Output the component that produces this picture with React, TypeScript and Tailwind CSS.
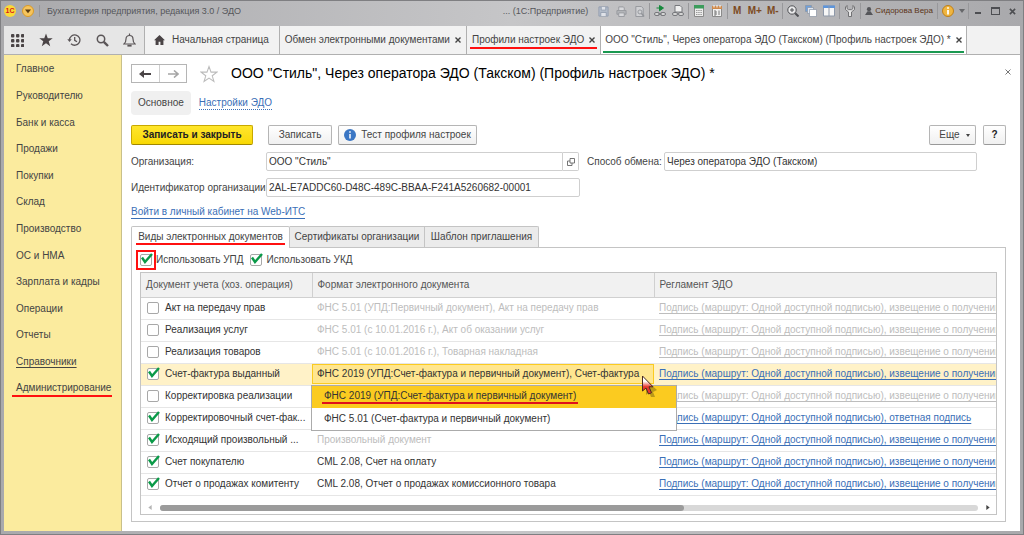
import type { ReactNode } from 'react';

const sections = [
  'Главное',
  'Руководителю',
  'Банк и касса',
  'Продажи',
  'Покупки',
  'Склад',
  'Производство',
  'ОС и НМА',
  'Зарплата и кадры',
  'Операции',
  'Отчеты',
  'Справочники',
  'Администрирование',
];

const receipt =
  'Подпись (маршрут: Одной доступной подписью), извещение о получении';
const reply =
  'Подпись (маршрут: Одной доступной подписью), ответная подпись';

interface IDocumentRow {
  name: string;
  format: string;
  rule: string;
  checked: boolean;
  muted?: boolean;
  selected?: boolean;
}

const rows: IDocumentRow[] = [
  { name: 'Акт на передачу прав', format: 'ФНС 5.01 (УПД:Первичный документ), Акт на передачу прав', rule: receipt, checked: false, muted: true },
  { name: 'Реализация услуг', format: 'ФНС 5.01 (с 10.01.2016 г.), Акт об оказании услуг', rule: receipt, checked: false, muted: true },
  { name: 'Реализация товаров', format: 'ФНС 5.01 (с 10.01.2016 г.), Товарная накладная', rule: receipt, checked: false, muted: true },
  { name: 'Счет-фактура выданный', format: 'ФНС 2019 (УПД:Счет-фактура и первичный документ), Счет-фактура', rule: receipt, checked: true, selected: true },
  { name: 'Корректировка реализации', format: '', rule: receipt, checked: false, muted: true },
  { name: 'Корректировочный счет-фак...', format: '', rule: reply, checked: true },
  { name: 'Исходящий произвольный ...', format: 'Произвольный документ', rule: receipt, checked: true },
  { name: 'Счет покупателю', format: 'CML 2.08, Счет на оплату', rule: receipt, checked: true },
  { name: 'Отчет о продажах комитенту', format: 'CML 2.08, Отчет о продажах комиссионного товара', rule: receipt, checked: true },
];

function Check({ checked, id }: { checked: boolean; id: string }) {
  return (
    <span className="relative block h-3 w-3 shrink-0">
      <input
        id={id}
        type="checkbox"
        defaultChecked={checked}
        className="peer block h-3 w-3 appearance-none rounded-xs border border-[#a8a8a8] bg-white"
      />
      <svg
        viewBox="0 0 14 14"
        className="pointer-events-none absolute -top-[3px] left-0 hidden h-[14px] w-[14px] peer-checked:block"
      >
        <path d="M2 6.500 5 11 12 3" fill="none" stroke="#0a9a48" strokeWidth="2.400" />
      </svg>
    </span>
  );
}

function Separator() {
  return <span className="mx-px block h-4 w-px shrink-0 bg-[#98989b]" />;
}

function ToolButton({ label, children }: { label: string; children: ReactNode }) {
  return (
    <button aria-label={label} className="flex h-4 w-[18px] shrink-0 items-center justify-center">
      {children}
    </button>
  );
}

function TitleBar() {
  return (
    <header className="flex h-5 items-center pr-1 text-[9px] text-[#55565a]">
      <span className="flex h-3 w-3 shrink-0 items-center justify-center rounded-full bg-[#fbd937] text-[7px] font-bold text-[#d8211c]">
        1С
      </span>
      <button
        aria-label="Главное меню"
        className="ml-[6px] flex h-3 w-3 shrink-0 items-center justify-center rounded-full border border-[#d99a28] bg-[#f6c45c]"
      >
        <svg viewBox="0 0 8 8" className="h-[6px] w-[6px]">
          <path d="M0 2h8L4 7z" fill="#5a3b10" />
        </svg>
      </button>
      <span className="ml-[5px] h-3 w-px bg-[#96969a]" />
      <h1 className="ml-[7px] truncate">Бухгалтерия предприятия, редакция 3.0 / ЭДО</h1>

      <div className="ml-auto flex items-center">
        <span className="mr-[6px] whitespace-nowrap">... (1С:Предприятие)</span>
        <ToolButton label="Сохранить">
          <svg viewBox="0 0 12 12" className="h-[11px] w-[11px]" fill="none" stroke="#929cae">
            <path d="M1 1h10v10H1z" fill="#b4bdca" />
            <path d="M3.500 1v3.500h5V1M3 11V7h6v4" fill="#dfe2e8" />
          </svg>
        </ToolButton>
        <ToolButton label="Печать">
          <svg viewBox="0 0 12 12" className="h-[11px] w-[11px]" fill="#b5b7bb" stroke="#95979c">
            <path d="M3 5V1h5l1 1v3" fill="#d8d9dc" />
            <path d="M1 5h10v4H1z" />
            <path d="M3 7.500h6v4H3z" fill="#d8d9dc" />
          </svg>
        </ToolButton>
        <ToolButton label="Предварительный просмотр">
          <svg viewBox="0 0 12 12" className="h-[11px] w-[11px]" fill="none" stroke="#929499">
            <path d="M2 .5h6l2 2v9H2z" fill="#cfd0d3" />
            <circle cx="6.500" cy="6.500" r="2.200" />
            <path d="m8 8 3 3.500" strokeWidth="1.600" />
          </svg>
        </ToolButton>
        <Separator />
        <ToolButton label="Добавить ссылку">
          <svg viewBox="0 0 12 12" className="h-3 w-3" fill="none" stroke="#77787c">
            <path d="M2.500 3h3V.5L9.500 3l-4 2.800V3" fill="#16883c" stroke="#16883c" />
            <rect x=".5" y="7.500" width="5" height="3" rx="1.500" fill="#d4d4d4" />
            <rect x="6.500" y="7.500" width="5" height="3" rx="1.500" fill="#d4d4d4" />
            <path d="M4 9h4" />
          </svg>
        </ToolButton>
        <ToolButton label="Перейти по ссылке">
          <svg viewBox="0 0 12 12" className="h-3 w-3" fill="none" stroke="#77787c">
            <path d="M3 .5h5l2 2V7H3z" fill="#f0f0f0" />
            <rect x=".5" y="7.500" width="5" height="3" rx="1.500" fill="#d4d4d4" />
            <rect x="6.500" y="7.500" width="5" height="3" rx="1.500" fill="#d4d4d4" />
          </svg>
        </ToolButton>
        <Separator />
        <ToolButton label="Калькулятор">
          <svg viewBox="0 0 12 12" className="h-3 w-3">
            <path d="M1.500.5h9v11h-9z" fill="#ececec" stroke="#8a8a8a" />
            <path d="M1 0h10v3.500H1z" fill="#3c9c5c" />
            <path d="M3 5.500h6M3 7.500h6M3 9.500h6" stroke="#9a9a9a" strokeDasharray="1.500 .7" />
          </svg>
        </ToolButton>
        <ToolButton label="Календарь">
          <svg viewBox="0 0 12 12" className="h-3 w-3">
            <path d="M1.500 1.500h9v10h-9z" fill="#f1f1f1" stroke="#8a8a8a" />
            <path d="M1 1h10v3H1z" fill="#cf8a4c" />
            <path d="M3 0v2.500M6 0v2.500M9 0v2.500" stroke="#fff" />
            <path d="M3 6h2v4M3 8h2M3 10h2M8 5.500V10" fill="none" stroke="#777" />
          </svg>
        </ToolButton>
        <Separator />
        <button className="w-4 text-[10px] font-bold text-[#7c4a22]">M</button>
        <button className="w-[19px] text-[10px] font-bold text-[#7c4a22]">M+</button>
        <button className="w-[17px] text-[10px] font-bold text-[#7c4a22]">M-</button>
        <Separator />
        <ToolButton label="Масштаб">
          <svg viewBox="0 0 12 12" className="h-3 w-3" fill="none" stroke="#4f5054">
            <circle cx="5" cy="5" r="4.200" fill="#e9e9ea" />
            <path d="M5 3v4M3 5h4" />
            <path d="m8.200 8.200 3.300 3.300" strokeWidth="2" />
          </svg>
        </ToolButton>
        <ToolButton label="Окна">
          <svg viewBox="0 0 12 12" className="h-3 w-3" stroke="#8a93a3" strokeWidth=".7">
            <path d="M.5.5h6v6h-6z" fill="#6ea0dc" />
            <path d="M2.500 2.500h6v6h-6z" fill="#dfe8f4" />
            <path d="M4.500 4.500h7v7h-7z" fill="#fff" />
          </svg>
        </ToolButton>
        <ToolButton label="Разделить окно">
          <svg viewBox="0 0 12 12" className="h-3 w-3">
            <path d="M.5 1h11v10H.5z" fill="#f6f6f6" stroke="#8e98a8" />
            <path d="M0 .5h12V3H0z" fill="#5e95da" />
            <path d="M6 1v10" stroke="#8e98a8" />
          </svg>
        </ToolButton>
        <Separator />
        <ToolButton label="Сервис">
          <svg viewBox="0 0 12 12" className="h-3 w-3" fill="#e6e6e6" stroke="#66676a" strokeWidth=".9">
            <path d="M3 .5v3l1.500 1.200h3L9 3.500v-3l1.500 1.500v2.500L7.500 7v4.500h-3V7l-3-2.500V2z" />
          </svg>
        </ToolButton>
        <Separator />
        <button className="mx-[3px] flex items-center gap-[2px] whitespace-nowrap text-[8px] text-[#5b3418]">
          <svg viewBox="0 0 8 8" className="h-2 w-2" fill="#55565a">
            <circle cx="4" cy="2.200" r="2.100" />
            <path d="M2.500 4.200h3L8 8H0z" />
          </svg>
          Сидорова Вера
        </button>
        <Separator />
        <button aria-label="О программе" className="ml-[3px] flex items-center gap-[5px]">
          <svg viewBox="0 0 12 12" className="h-3 w-3">
            <circle cx="6" cy="6" r="5.500" fill="#efb53f" stroke="#bd7f1b" />
            <path d="M6 2.200v1.600M6 5v4.500" stroke="#fff" strokeWidth="1.800" />
          </svg>
          <svg viewBox="0 0 6 4" className="h-1 w-[6px]">
            <path d="M0 0h6L3 4z" fill="#66676a" />
          </svg>
        </button>
        <span className="ml-[2px]">
          <Separator />
        </span>
        <button aria-label="Свернуть" className="ml-[5px] flex h-3 w-4 items-center">
          <span className="mt-1 block h-[2px] w-[6px] bg-[#4d4e52]" />
        </button>
        <button aria-label="Развернуть" className="h-2 w-[9px] border border-t-2 border-[#4d4e52]" />
        <button aria-label="Закрыть" className="ml-[9px]">
          <svg viewBox="0 0 8 8" className="h-[7px] w-[7px]">
            <path d="m1 1 6 6M7 1 1 7" stroke="#4d4e52" strokeWidth="1.800" />
          </svg>
        </button>
      </div>
    </header>
  );
}

function CloseIcon() {
  return (
    <svg viewBox="0 0 6 6" className="h-[6px] w-[6px]">
      <path d="m.5.5 5 5M5.500.5l-5 5" stroke="#444" strokeWidth="1.400" />
    </svg>
  );
}

function NavTab({ title, mark, active }: { title: string; mark?: string; active?: boolean }) {
  return (
    <div
      className={
        'flex shrink-0 items-center border-l border-[#b0b0b0] ' +
        (active ? 'border-r bg-white px-[2px]' : 'bg-[#f2f2f2] px-[3px]')
      }
    >
      <div
        className={
          'flex h-full items-center gap-[5px] whitespace-nowrap px-[2px] ' +
          (mark ?? '')
        }
      >
        <button>{title}</button>
        <button aria-label={'Закрыть: ' + title}>
          <CloseIcon />
        </button>
      </div>
    </div>
  );
}

function TabBar() {
  return (
    <div className="flex h-[29px] border-b border-[#b0b0b0] bg-[#f2f2f2]">
      <div className="flex w-[140px] shrink-0 items-center justify-between bg-[#e6e6e6] pl-[7px] pr-2">
        <button aria-label="Меню функций">
          <svg viewBox="0 0 13 13" className="h-[13px] w-[13px]" fill="#4a4446">
            {[0, 5, 10].map((y) =>
              [0, 5, 10].map((x) => <rect key={x + '-' + y} x={x} y={y} width="3.400" height="3.400" rx="1" />),
            )}
          </svg>
        </button>
        <button aria-label="Избранное">
          <svg viewBox="0 0 24 24" className="h-[14px] w-[14px]" fill="#4a4446">
            <path d="m12 1 3 8h8.500l-6.800 5.200 2.500 8.300L12 17.600l-7.200 4.900 2.500-8.300L.5 9H9z" />
          </svg>
        </button>
        <button aria-label="История">
          <svg viewBox="0 0 14 14" className="h-[14px] w-[14px]" fill="none" stroke="#5a5557" strokeWidth="1.300">
            <path d="M2.500 7a5.200 5.200 0 1 1 1.500 3.700" />
            <path d="M.3 6.300h4.400L2.500 9z" fill="#5a5557" stroke="none" />
            <path d="M7.700 4v3.300l2.300 1.500" />
          </svg>
        </button>
        <button aria-label="Поиск">
          <svg viewBox="0 0 13 13" className="h-[13px] w-[13px]" fill="none" stroke="#5a5557">
            <circle cx="5" cy="5" r="3.700" strokeWidth="1.500" />
            <path d="m7.800 7.800 4.200 4.200" strokeWidth="2.400" />
          </svg>
        </button>
        <button aria-label="Уведомления">
          <svg viewBox="0 0 13 14" className="h-[14px] w-[13px]" fill="none" stroke="#5a5557" strokeWidth="1.200">
            <path d="M1 11c1.600-1.300 2-2.500 2-5a3.500 3.500 0 0 1 7 0c0 2.500.4 3.700 2 5z" />
            <path d="M6.500 2.500V.5" />
            <path d="M5 12.300h3v.7H5z" fill="#5a5557" />
          </svg>
        </button>
      </div>
      <button className="flex shrink-0 items-center gap-[7px] whitespace-nowrap border-l border-[#b0b0b0] pl-[9px] pr-[10px]">
        <svg viewBox="0 0 12 11" className="h-[10px] w-[11px]" fill="#4a4446">
          <path d="M6 0 0 5.700h1.700V11H5V7.500h2V11h3.300V5.700H12z" />
        </svg>
        Начальная страница
      </button>
      <NavTab title="Обмен электронными документами" />
      <NavTab
        title="Профили настроек ЭДО"
        mark="bg-[linear-gradient(#ff1010,#ff1010)] bg-[length:100%_2px] bg-[position:0_21px] bg-no-repeat"
      />
      <NavTab
        active
        title={'ООО "Стиль", Через оператора ЭДО (Такском) (Профиль настроек ЭДО) *'}
        mark="bg-[linear-gradient(#1a9850,#1a9850)] bg-[length:100%_2px] bg-[position:0_25px] bg-no-repeat"
      />
    </div>
  );
}

function Sidebar() {
  return (
    <nav className="w-[118px] shrink-0 border-r border-[#c9c08a] bg-[#fbeb9e] pl-3 pt-px">
      <ul className="grid h-[346px] auto-rows-fr">
        {sections.map((name, index) => (
          <li key={name} className="flex items-center">
            <a
              href="#"
              className={
                index === 12
                  ? '-ml-1 border-b-2 border-[#ff1010] pl-1 pr-px'
                  : index === 11
                    ? 'underline underline-offset-2'
                    : ''
              }
            >
              {name}
            </a>
          </li>
        ))}
      </ul>
    </nav>
  );
}

const buttonStyle =
  'flex h-5 items-center justify-center rounded-xs border border-[#b5b5b5] border-b-[#999] bg-linear-to-b from-white to-[#f0f0f0] whitespace-nowrap';
const inputStyle =
  'h-[19px] min-w-0 rounded-xs border border-[#cfcfcf] bg-white px-[2px] text-[10px] text-[#333]';

function FormHead() {
  return (
    <>
      <div className="flex items-center pt-[9px]">
        <div className="flex h-[19px] w-14 border border-[#b5b5b5]">
          <button aria-label="Назад" className="flex flex-1 items-center justify-center border-r border-[#cfcfcf]">
            <svg viewBox="0 0 12 8" className="h-2 w-3">
              <path d="M5 0v8L0 4zM4 3h8v2H4z" fill="#4a4446" />
            </svg>
          </button>
          <button aria-label="Вперед" className="flex flex-1 items-center justify-center">
            <svg viewBox="0 0 12 8" className="h-2 w-3">
              <path d="M7 .5 11 4 7 7.500M11 4H1" fill="none" stroke="#a5a5a5" strokeWidth="1.600" />
            </svg>
          </button>
        </div>
        <button aria-label="Добавить в избранное" className="ml-[13px]">
          <svg viewBox="0 0 24 24" className="h-[18px] w-[18px]" fill="#fff" stroke="#bcbcbc" strokeWidth="1.400">
            <path d="m12 2 2.700 7.500h7.800l-6.200 4.900 2.300 7.600-6.600-4.600L5.400 22l2.300-7.600-6.200-4.900h7.800z" />
          </svg>
        </button>
        <h2 className="ml-[13px] whitespace-nowrap text-[14px] leading-[19px] text-black">
          ООО "Стиль", Через оператора ЭДО (Такском) (Профиль настроек ЭДО) *
        </h2>
        <button aria-label="Закрыть форму" className="-mt-1 ml-auto mr-[9px]">
          <svg viewBox="0 0 6 6" className="h-[6px] w-[6px]">
            <path d="m.5.5 5 5M5.500.5l-5 5" stroke="#777" />
          </svg>
        </button>
      </div>
      <div className="mt-2 flex h-6 items-center gap-2">
        <button className="h-6 rounded-sm bg-[#f0f0f0] px-[7px]">Основное</button>
        <a href="#" className="border-b border-dotted border-[#3a6fb7] leading-[12px] text-[#3a6fb7]">
          Настройки ЭДО
        </a>
      </div>
      <div className="mr-[14px] mt-[10px] flex">
        <button className="h-5 w-[122px] rounded-xs border border-[#c8a800] border-b-[#a08700] bg-linear-to-b from-[#ffe62a] to-[#f8d800] font-bold text-[#222]">
          Записать и закрыть
        </button>
        <button className={buttonStyle + ' ml-[15px] w-16'}>Записать</button>
        <button className={buttonStyle + ' ml-[6px] w-[139px] gap-[5px]'}>
          <svg viewBox="0 0 12 12" className="h-3 w-3">
            <circle cx="6" cy="6" r="6" fill="#3a76c4" />
            <path d="M6 2.300v1.500M6 5v4.500" stroke="#fff" strokeWidth="1.500" />
          </svg>
          Тест профиля настроек
        </button>
        <button className={buttonStyle + ' ml-auto w-[47px] gap-[6px] pl-1'}>
          Еще
          <svg viewBox="0 0 4 3" className="h-[3px] w-1">
            <path d="M0 0h4L2 3z" fill="#444" />
          </svg>
        </button>
        <button className={buttonStyle + ' ml-[7px] w-[23px] font-bold text-[#222]'}>?</button>
      </div>
      <div className="mt-[7px] flex items-center">
        <label htmlFor="org" className="w-[135px] shrink-0">Организация:</label>
        <div className="flex w-[313px]">
          <input id="org" defaultValue={'ООО "Стиль"'} className={inputStyle + ' flex-1 rounded-r-none'} />
          <button
            aria-label="Открыть организацию"
            className="flex h-[19px] w-4 items-center justify-center rounded-r-xs border border-l-0 border-[#cfcfcf]"
          >
            <svg viewBox="0 0 8 8" className="h-2 w-2" fill="none" stroke="#666" strokeWidth=".9">
              <path d="M3 .5h4.500v4.500H3zM3 3H.5v4.500H5V5" />
            </svg>
          </button>
        </div>
        <label htmlFor="exchange" className="ml-2 w-[77px] shrink-0 whitespace-nowrap">Способ обмена:</label>
        <input
          id="exchange"
          defaultValue="Через оператора ЭДО (Такском)"
          className={inputStyle + ' mr-[43px] flex-1'}
        />
      </div>
      <div className="mt-[7px] flex items-center">
        <label htmlFor="orgId" className="w-[135px] shrink-0 whitespace-nowrap">Идентификатор организации:</label>
        <input
          id="orgId"
          defaultValue="2AL-E7ADDC60-D48C-489C-BBAA-F241A5260682-00001"
          className={inputStyle + ' w-[314px]'}
        />
      </div>
      <a href="#" className="mt-2 block w-fit border-b border-[#3a6fb7] leading-[13px] text-[#3a6fb7]">
        Войти в личный кабинет на Web-ИТС
      </a>
    </>
  );
}

function FormatMenu() {
  return (
    <ul
      role="listbox"
      aria-label="Формат электронного документа"
      className="absolute left-[-1px] top-[21px] z-10 w-[366px] border border-[#ababab] bg-white"
    >
      <li role="option" aria-selected="true" className="flex h-[22px] items-center bg-[#fbcb20] pl-[10px]">
        <span className="border-b-2 border-[#e0101c] px-[2px] leading-[12px]">
          ФНС 2019 (УПД:Счет-фактура и первичный документ)
        </span>
      </li>
      <li role="option" aria-selected="false" className="flex h-[22px] items-center pl-3">
        ФНС 5.01 (Счет-фактура и первичный документ)
      </li>
    </ul>
  );
}

function Pointer() {
  return (
    <svg viewBox="0 0 16 22" className="pointer-events-none absolute left-[329px] top-[11px] z-20 h-[22px] w-4">
      <defs>
        <linearGradient id="pointer" x1="0" y1="0" x2="0" y2="1">
          <stop offset=".3" stopColor="#fff" />
          <stop offset=".6" stopColor="#e8362c" />
        </linearGradient>
      </defs>
      <path d="m5 5 11 10-4 2 2 5-4 0-2-5-3 3z" fill="#6b5a10" opacity=".45" />
      <path d="M1.500 1v15l3.500-3 2.500 6 3-1.200-2.500-6h4z" fill="url(#pointer)" stroke="#4a2a22" />
    </svg>
  );
}

function DocumentTable() {
  return (
    <div className="border border-[#c4c4c4]">
      <table className="w-full table-fixed border-collapse">
        <thead className="bg-[#f1f1f1] text-left text-[#555]">
          <tr className="h-6 border-b border-[#d0d0d0]">
            <th className="w-[171px] border-r border-[#d0d0d0] p-0 pl-[5px] font-normal">Документ учета (хоз. операция)</th>
            <th className="w-[342px] border-r border-[#d0d0d0] p-0 pl-[5px] font-normal">Формат электронного документа</th>
            <th className="p-0 pl-[5px] font-normal">Регламент ЭДО</th>
          </tr>
        </thead>
        <tbody>
          {rows.map((row, index) => (
            <tr
              key={row.name}
              className={'h-[22px] border-b border-[#e6e6e6] ' + (row.selected ? 'bg-[#fff2c8]' : '')}
            >
              <td className="p-0 pl-[6px]">
                <div className="flex items-center gap-[6px]">
                  <Check id={'row' + index} checked={row.checked} />
                  <label htmlFor={'row' + index} className="whitespace-nowrap text-[#333]">{row.name}</label>
                </div>
              </td>
              <td className={'p-0 ' + (row.checked && index !== 6 ? 'text-[#333]' : 'text-[#bdbdbd]')}>
                {row.selected ? (
                  <div className="relative">
                    <button
                      aria-haspopup="listbox"
                      aria-expanded="true"
                      className="block h-5 w-full whitespace-nowrap border border-[#fbcb20] bg-[#ffe68f] pl-1 text-left"
                    >
                      {row.format}
                    </button>
                    <FormatMenu />
                    <Pointer />
                  </div>
                ) : (
                  <span className="block truncate pl-[5px]">{row.format}</span>
                )}
              </td>
              <td className="overflow-hidden whitespace-nowrap p-0 pl-[5px]">
                <a
                  href="#"
                  className={
                    row.muted
                      ? 'text-[#bdbdbd] underline underline-offset-2'
                      : 'text-[#3a6fb7] underline underline-offset-2'
                  }
                >
                  {row.rule}
                </a>
              </td>
            </tr>
          ))}
        </tbody>
      </table>
      <div className="flex h-[18px] items-center gap-2 pl-[7px] pr-[6px] pt-[6px]">
        <svg viewBox="0 0 4 6" className="h-[5px] w-1">
          <path d="M4 0v6L0 3z" fill="#b5b5b5" />
        </svg>
        <div className="h-[6px] flex-1 rounded-full bg-[#d8d8d8]">
          <div className="h-full w-[64%] rounded-full bg-[#9b9b9b]" />
        </div>
        <svg viewBox="0 0 4 6" className="h-[5px] w-1">
          <path d="M0 0v6l4-3z" fill="#444" />
        </svg>
      </div>
    </div>
  );
}

function DocumentTypes() {
  return (
    <section className="mr-[14px] mt-[7px]">
      <div role="tablist" className="flex h-[21px]">
        <button
          role="tab"
          aria-selected="true"
          className="z-10 -mb-px w-[159px] whitespace-nowrap rounded-t-xs border border-b-0 border-[#c4c4c4] bg-white px-1"
        >
          <span className="block border-b-2 border-[#ff1010] leading-[12px]">Виды электронных документов</span>
        </button>
        <button role="tab" aria-selected="false" className="w-[135px] whitespace-nowrap border-r border-t border-[#c4c4c4] bg-[#ebebeb]">
          Сертификаты организации
        </button>
        <button role="tab" aria-selected="false" className="w-[114px] whitespace-nowrap rounded-tr-xs border-r border-t border-[#c4c4c4] bg-[#ebebeb]">
          Шаблон приглашения
        </button>
      </div>
      <div className="border border-[#c4c4c4] px-2 pb-[6px]">
        <div className="flex h-6 items-center">
          <span className="-ml-1 border-2 border-[#ff1010] p-[2px]">
            <Check id="upd" checked />
          </span>
          <label htmlFor="upd" className="whitespace-nowrap">Использовать УПД</label>
          <span className="ml-[7px]">
            <Check id="ukd" checked />
          </span>
          <label htmlFor="ukd" className="ml-1 whitespace-nowrap">Использовать УКД</label>
        </div>
        <DocumentTable />
      </div>
    </section>
  );
}

export default function App() {
  return (
    <div className="flex min-h-screen flex-col border border-[#7f7f82] bg-linear-to-r from-[#a9a9ac] via-[#c6c6c8] to-[#a9a9ac] px-[3px] pb-[3px] font-['Liberation_Sans',Arial,sans-serif] text-[10px] leading-[14px] text-[#444]">
      <TitleBar />
      <div className="mt-[5px] flex flex-1 flex-col bg-white">
        <TabBar />
        <div className="flex flex-1">
          <Sidebar />
          <main className="min-w-0 flex-1 pl-[9px]">
            <FormHead />
            <DocumentTypes />
          </main>
        </div>
      </div>
    </div>
  );
}
